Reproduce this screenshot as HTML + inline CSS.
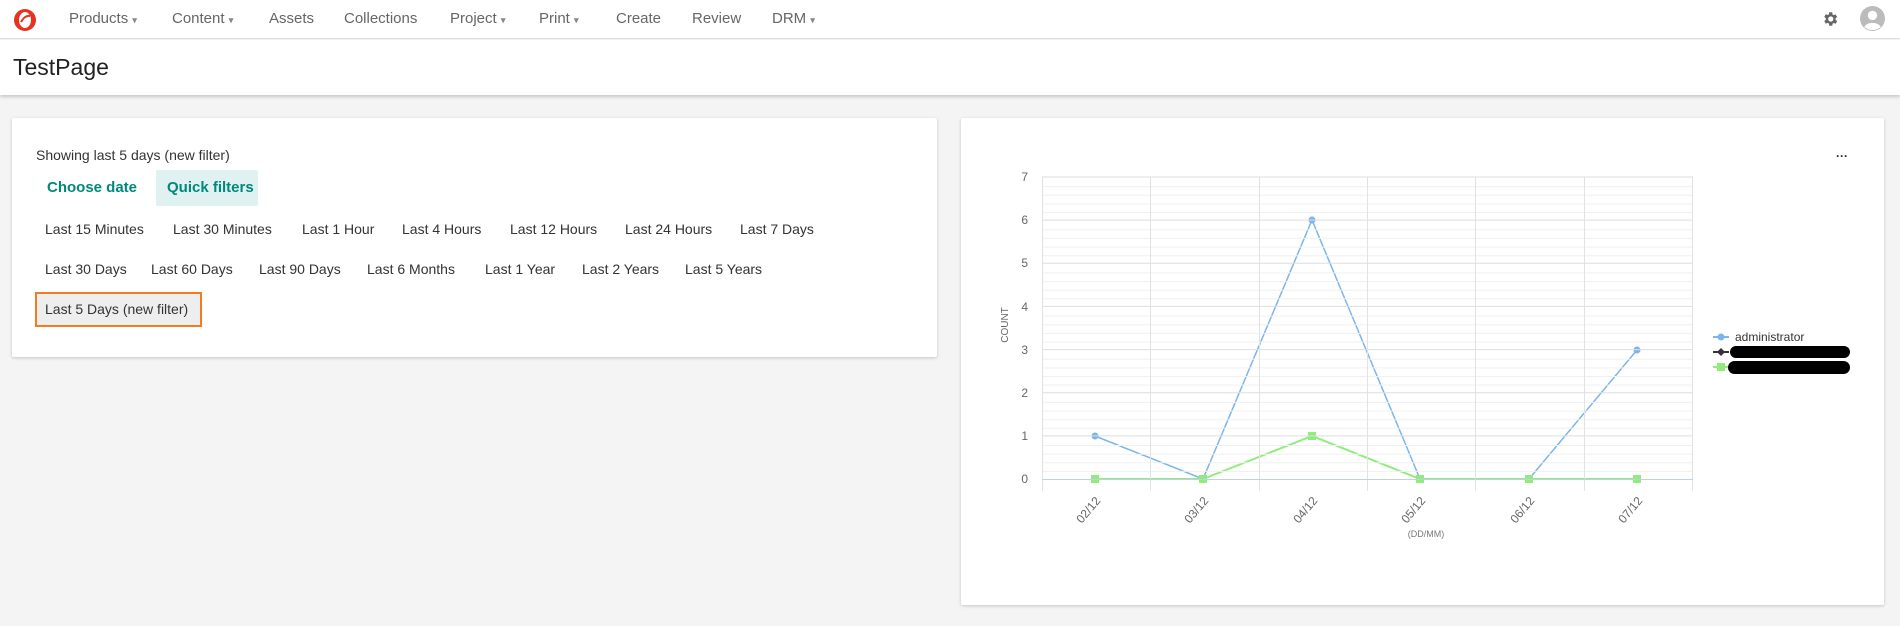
<!DOCTYPE html>
<html><head><meta charset="utf-8"><style>
*{margin:0;padding:0;box-sizing:border-box}
body{width:1900px;height:626px;background:#f4f4f4;font-family:"Liberation Sans",sans-serif;position:relative;overflow:hidden;color:#333}
.nav{position:absolute;left:0;top:0;width:1900px;height:39px;background:#fff;border-bottom:1px solid #ddd}
.nav span{position:absolute;top:10px;font-size:15px;color:#666}
.hdr{position:absolute;left:0;top:40px;width:1900px;height:55px;background:#fff;box-shadow:0 2px 3px rgba(0,0,0,.18)}
.hdr h1{position:absolute;left:13px;top:14px;font-size:23px;font-weight:normal;color:#222}
.card{position:absolute;background:#fff;box-shadow:0 1px 3px rgba(0,0,0,.2);border-radius:2px}
.t{position:absolute;font-size:14px;color:#333;white-space:nowrap}
.car{font-size:9px;color:#888}
</style></head><body>
<div class="nav">
<svg style="position:absolute;left:12px;top:7px" width="26" height="26" viewBox="0 0 26 26"><circle cx="13" cy="13" r="11" fill="#e8321e"/><ellipse cx="13" cy="13" rx="6" ry="8" fill="#fff"/><path d="M9 15 Q13 8 18 9" stroke="#e8321e" stroke-width="2" fill="none"/></svg>
<span style="left:69px">Products <b class="car">▾</b></span>
<span style="left:172px">Content <b class="car">▾</b></span>
<span style="left:269px">Assets</span>
<span style="left:344px">Collections</span>
<span style="left:450px">Project <b class="car">▾</b></span>
<span style="left:539px">Print <b class="car">▾</b></span>
<span style="left:616px">Create</span>
<span style="left:692px">Review</span>
<span style="left:772px">DRM <b class="car">▾</b></span>
<svg style="position:absolute;left:1821px;top:10px" width="18" height="18" viewBox="0 0 24 24"><path fill="#666" d="M19.4 13a7.5 7.5 0 0 0 0-2l2.1-1.6-2-3.5-2.5 1a7.6 7.6 0 0 0-1.7-1L15 3h-4l-.4 2.7a7.6 7.6 0 0 0-1.7 1l-2.5-1-2 3.5L6.5 11a7.5 7.5 0 0 0 0 2l-2.1 1.6 2 3.5 2.5-1c.5.4 1.1.7 1.7 1L11 21h4l.4-2.7c.6-.3 1.2-.6 1.7-1l2.5 1 2-3.5zM13 15.5a3.5 3.5 0 1 1 0-7 3.5 3.5 0 0 1 0 7z"/></svg>
<svg style="position:absolute;left:1860px;top:6px" width="25" height="25" viewBox="0 0 24 24"><circle cx="12" cy="12" r="12" fill="#bbb"/><circle cx="12" cy="9" r="4.5" fill="#fff"/><path d="M4 20a9 7 0 0 1 16 0 12 12 0 0 1-16 0z" fill="#fff"/></svg>
</div>
<div class="hdr"><h1>TestPage</h1></div>
<div class="card" style="left:12px;top:118px;width:925px;height:239px"></div>
<div class="t" style="left:36px;top:147px;font-size:14px">Showing last 5 days (new filter)</div>
<div class="t" style="left:47px;top:179px;color:#00897b;font-size:15px;font-weight:bold">Choose date</div>
<div style="position:absolute;left:156px;top:170px;width:102px;height:36px;background:#dff1f0;border-radius:2px"></div>
<div class="t" style="left:167px;top:179px;color:#00897b;font-size:15px;font-weight:bold">Quick filters</div>
<div class="t" style="left:45px;top:221px">Last 15 Minutes</div>
<div class="t" style="left:173px;top:221px">Last 30 Minutes</div>
<div class="t" style="left:302px;top:221px">Last 1 Hour</div>
<div class="t" style="left:402px;top:221px">Last 4 Hours</div>
<div class="t" style="left:510px;top:221px">Last 12 Hours</div>
<div class="t" style="left:625px;top:221px">Last 24 Hours</div>
<div class="t" style="left:740px;top:221px">Last 7 Days</div>
<div class="t" style="left:45px;top:261px">Last 30 Days</div>
<div class="t" style="left:151px;top:261px">Last 60 Days</div>
<div class="t" style="left:259px;top:261px">Last 90 Days</div>
<div class="t" style="left:367px;top:261px">Last 6 Months</div>
<div class="t" style="left:485px;top:261px">Last 1 Year</div>
<div class="t" style="left:582px;top:261px">Last 2 Years</div>
<div class="t" style="left:685px;top:261px">Last 5 Years</div>
<div style="position:absolute;left:35px;top:292px;width:167px;height:35px;background:#eee;border:2px solid #f47b20"></div>
<div class="t" style="left:45px;top:301px">Last 5 Days (new filter)</div>
<div class="card" style="left:961px;top:118px;width:923px;height:487px"></div>
<svg style="position:absolute;left:0;top:0" width="1900" height="626">
<g stroke="#eee" stroke-width="1">
<script></script>
</g>
<g id="grid" stroke="#ececec"></g>
<g font-family="Liberation Sans" font-size="12" fill="#666" text-anchor="end">
<text x="1028" y="483">0</text><text x="1028" y="440">1</text><text x="1028" y="397">2</text><text x="1028" y="354">3</text><text x="1028" y="311">4</text><text x="1028" y="267">5</text><text x="1028" y="224">6</text><text x="1028" y="181">7</text>
</g>
<text x="1008" y="325" font-family="Liberation Sans" font-size="10" fill="#666" text-anchor="middle" transform="rotate(-90 1008 325)">COUNT</text>
<g font-family="Liberation Sans" font-size="12" fill="#666" text-anchor="end">
<text transform="translate(1101 501) rotate(-50)">02/12</text>
<text transform="translate(1209 501) rotate(-50)">03/12</text>
<text transform="translate(1318 501) rotate(-50)">04/12</text>
<text transform="translate(1426 501) rotate(-50)">05/12</text>
<text transform="translate(1535 501) rotate(-50)">06/12</text>
<text transform="translate(1643 501) rotate(-50)">07/12</text>
</g>
<text x="1426" y="537" font-family="Liberation Sans" font-size="9" fill="#777" text-anchor="middle">(DD/MM)</text>
<text x="1836" y="160" font-family="Liberation Sans" font-size="12" font-weight="bold" fill="#222">···</text>
<polyline points="1095,436 1203,479 1312,220 1420,479 1529,479 1637,350" fill="none" stroke="#7cb5ec" stroke-width="1.5"/>
<g fill="#7cb5ec"><circle cx="1095" cy="436" r="3.5"/><circle cx="1203" cy="479" r="3.5"/><circle cx="1312" cy="220" r="3.5"/><circle cx="1420" cy="479" r="3.5"/><circle cx="1529" cy="479" r="3.5"/><circle cx="1637" cy="350" r="3.5"/></g>
<polyline points="1095,479 1203,479 1312,436 1420,479 1529,479 1637,479" fill="none" stroke="#90ed7d" stroke-width="2"/>
<g fill="#90ed7d"><rect x="1091" y="475" width="8" height="8"/><rect x="1199" y="475" width="8" height="8"/><rect x="1308" y="432" width="8" height="8"/><rect x="1416" y="475" width="8" height="8"/><rect x="1525" y="475" width="8" height="8"/><rect x="1633" y="475" width="8" height="8"/></g>
<line x1="1713" y1="337" x2="1729" y2="337" stroke="#7cb5ec" stroke-width="2"/><circle cx="1721" cy="337" r="3.5" fill="#7cb5ec"/>
<text x="1735" y="341" font-family="Liberation Sans" font-size="12" fill="#333">administrator</text>
<line x1="1713" y1="352" x2="1729" y2="352" stroke="#333" stroke-width="2"/><path d="M1721 348l4 4-4 4-4-4z" fill="#333"/>
<rect x="1730" y="346" width="120" height="12" rx="6" fill="#000"/>
<line x1="1713" y1="367" x2="1729" y2="367" stroke="#90ed7d" stroke-width="2"/><rect x="1717" y="363" width="8" height="8" fill="#90ed7d"/>
<rect x="1728" y="361" width="122" height="13" rx="6.5" fill="#000"/>
</svg>
<svg style="position:absolute;left:0;top:0" width="1900" height="626">
<g stroke="#e8e8e8" stroke-width="1" fill="none">
<path d="M1042 186.6H1693M1042 195.3H1693M1042 203.9H1693M1042 212.5H1693M1042 229.8H1693M1042 238.4H1693M1042 247.1H1693M1042 255.7H1693M1042 272.9H1693M1042 281.6H1693M1042 290.2H1693M1042 298.8H1693M1042 316.1H1693M1042 324.7H1693M1042 333.4H1693M1042 342H1693M1042 359.2H1693M1042 367.9H1693M1042 376.5H1693M1042 385.1H1693M1042 402.4H1693M1042 411H1693M1042 419.7H1693M1042 428.3H1693M1042 445.5H1693M1042 454.2H1693M1042 462.8H1693M1042 471.4H1693" stroke="#f0f0f0"/>
<path d="M1042 177H1693M1042 220.1H1693M1042 263.3H1693M1042 306.4H1693M1042 349.6H1693M1042 392.7H1693M1042 435.9H1693" stroke="#dedede"/>
<path d="M1042.5 177V491M1150.5 177V491M1259.5 177V491M1367.5 177V491M1475.5 177V491M1584.5 177V491M1692.5 177V491" stroke="#e2e2e2"/>
<path d="M1042 479.5H1693" stroke="#c0d0e0"/>
</g>
</svg>
</body></html>
